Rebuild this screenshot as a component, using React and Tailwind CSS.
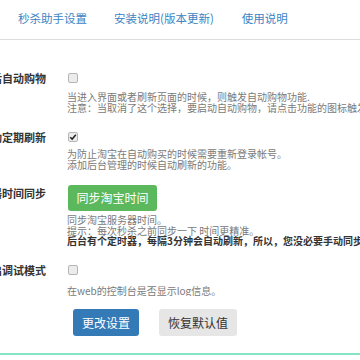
export default function App() {
  const font = { fontFamily: '"Noto Sans CJK SC", "Noto Sans", sans-serif' };
  const Box = ({ checked }) => (
    <span className="inline-flex h-[10px] w-[10px] items-center justify-center rounded-[2px] border border-[#b5b5b5] bg-[#ececec]">
      {checked && (
        <svg viewBox="0 0 10 10" className="h-[8px] w-[8px]">
          <path d="M1.5 5.2 L4 7.6 L8.5 2.2" fill="none" stroke="#222" strokeWidth="1.8" />
        </svg>
      )}
    </span>
  );
  const Label = ({ children, className = "" }) => (
    <div className={"flex w-[46px] shrink-0 justify-end overflow-hidden whitespace-nowrap text-[11px] font-bold leading-[20px] text-[#333] " + className}>
      <span>{children}</span>
    </div>
  );
  const help = "whitespace-nowrap text-[10px] leading-[10.5px] text-[#7a7a7a]";
  return (
    <div className="h-[360px] w-[360px] overflow-hidden bg-white" style={font}>
      <div className="flex h-[40px] items-center border-b border-[#dddddd] pb-[2px] text-[11.5px] text-[#3a84c4]">
        <span className="ml-[18px]">秒杀助手设置</span>
        <span className="ml-[27px]">安装说明(版本更新)</span>
        <span className="ml-[28px]">使用说明</span>
      </div>

      {/* row 1 */}
      <div className="mt-[28px] flex">
        <Label>启动后自动购物</Label>
        <div className="ml-[21px] min-w-0 flex-1 overflow-hidden">
          <div className="flex h-[20px] items-center pl-[1px]"><Box /></div>
          <div className={"mt-[4px] " + help}>
            <div>当进入界面或者刷新页面的时候，则触发自动购物功能.</div>
            <div>注意：当取消了这个选择，要启动自动购物，请点击功能的图标触发</div>
          </div>
        </div>
      </div>

      {/* row 2 */}
      <div className="mt-[14px] flex">
        <Label>启动定期刷新</Label>
        <div className="ml-[21px] min-w-0 flex-1 overflow-hidden">
          <div className="flex h-[20px] items-center pl-[1px]"><Box checked /></div>
          <div className={"mt-[2px] " + help}>
            <div>为防止淘宝在自动购买的时候需要重新登录帐号。</div>
            <div>添加后台管理的时候自动刷新的功能。</div>
          </div>
        </div>
      </div>

      {/* row 3 */}
      <div className="mt-[15px] flex">
        <Label className="mt-[-2px]">服务器时间同步</Label>
        <div className="ml-[21px] min-w-0 flex-1 overflow-hidden">
          <button className="ml-[1px] flex h-[26px] w-[89px] items-center justify-center rounded-[3px] bg-[#5cb85c] text-[12px] text-white">同步淘宝时间</button>
          <div className={"mt-[4px] " + help}>
            <div>同步淘宝服务器时间。</div>
            <div>提示：每次秒杀之前同步一下 时间更精准。</div>
            <div className="font-bold text-[#333]">后台有个定时器，每隔3分钟会自动刷新，所以，您没必要手动同步</div>
          </div>
        </div>
      </div>

      {/* row 4 */}
      <div className="mt-[13px] flex">
        <Label>开启调试模式</Label>
        <div className="ml-[21px] min-w-0 flex-1 overflow-hidden">
          <div className="flex h-[20px] items-center pl-[1px]"><Box /></div>
          <div className={"mt-[6px] " + help}>
            <div>在web的控制台是否显示log信息。</div>
          </div>
        </div>
      </div>

      <div className="mt-[13px] flex pl-[73px]">
        <button className="flex h-[27px] w-[66px] items-center justify-center rounded-[3px] bg-[#337ab7] text-[12px] text-white">更改设置</button>
        <button className="ml-[20px] flex h-[27px] w-[78px] items-center justify-center rounded-[3px] bg-[#e6e6e6] text-[12px] text-[#333]">恢复默认值</button>
      </div>

      <div className="mt-[17px] h-[2px] bg-[#86e3c6]"></div>
    </div>
  );
}
